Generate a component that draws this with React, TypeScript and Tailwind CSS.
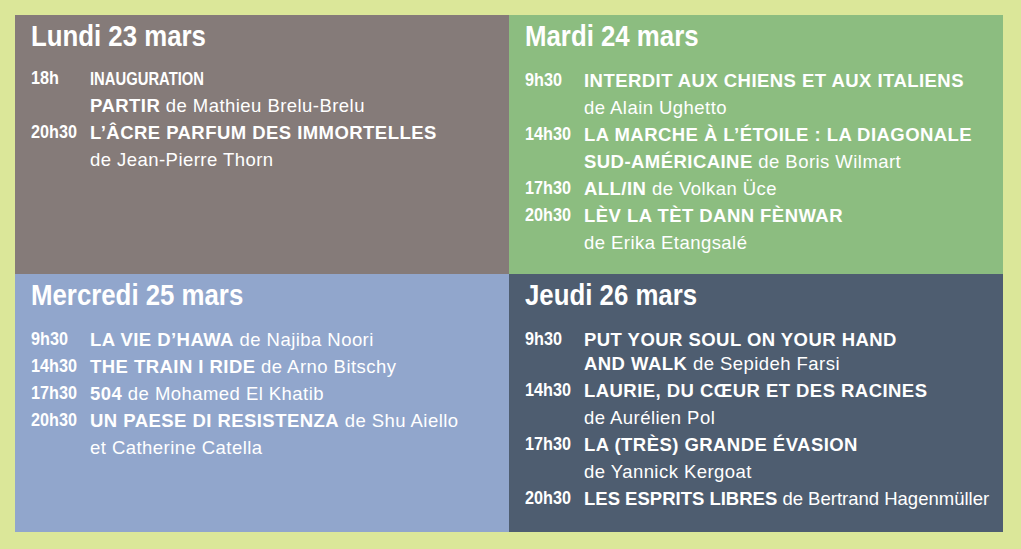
import React from "react";

type Line = { b?: string; r?: string; narrow?: boolean; tight?: boolean };
type Item = { time: string; lines: Line[]; tight?: boolean };
type Day = { title: string; bg: string; items: Item[] };

const days: Day[] = [
  {
    title: "Lundi 23 mars",
    bg: "bg-[#857b79]",
    items: [
      { time: "18h", lines: [{ b: "INAUGURATION", narrow: true }, { b: "PARTIR", r: " de Mathieu Brelu-Brelu" }] },
      { time: "20h30", lines: [{ b: "L’ÂCRE PARFUM DES IMMORTELLES" }, { r: "de Jean-Pierre Thorn" }] },
    ],
  },
  {
    title: "Mardi 24 mars",
    bg: "bg-[#8cbd80]",
    items: [
      { time: "9h30", lines: [{ b: "INTERDIT AUX CHIENS ET AUX ITALIENS" }, { r: "de Alain Ughetto" }] },
      { time: "14h30", lines: [{ b: "LA MARCHE À L’ÉTOILE : LA DIAGONALE" }, { b: "SUD-AMÉRICAINE", r: " de Boris Wilmart" }] },
      { time: "17h30", lines: [{ b: "ALL/IN", r: " de Volkan Üce" }] },
      { time: "20h30", lines: [{ b: "LÈV LA TÈT DANN FÈNWAR" }, { r: "de Erika Etangsalé" }] },
    ],
  },
  {
    title: "Mercredi 25 mars",
    bg: "bg-[#91a6cc]",
    items: [
      { time: "9h30", lines: [{ b: "LA VIE D’HAWA", r: " de Najiba Noori" }] },
      { time: "14h30", lines: [{ b: "THE TRAIN I RIDE", r: " de Arno Bitschy" }] },
      { time: "17h30", lines: [{ b: "504", r: " de Mohamed El Khatib" }] },
      { time: "20h30", lines: [{ b: "UN PAESE DI RESISTENZA", r: " de Shu Aiello" }, { r: "et Catherine Catella" }] },
    ],
  },
  {
    title: "Jeudi 26 mars",
    bg: "bg-[#4e5d70]",
    items: [
      { time: "9h30", tight: true, lines: [{ b: "PUT YOUR SOUL ON YOUR HAND" }, { b: "AND WALK", r: " de Sepideh Farsi" }] },
      { time: "14h30", lines: [{ b: "LAURIE, DU CŒUR ET DES RACINES" }, { r: "de Aurélien Pol" }] },
      { time: "17h30", lines: [{ b: "LA (TRÈS) GRANDE ÉVASION" }, { r: "de Yannick Kergoat" }] },
      { time: "20h30", lines: [{ b: "LES ESPRITS LIBRES", r: " de Bertrand Hagenmüller", tight: true }] },
    ],
  },
];

function Panel({ day, first }: { day: Day; first?: boolean }) {
  return (
    <div className={`${day.bg} text-white pl-4 pt-[3px] font-['Liberation_Sans',Arial,sans-serif]`}>
      <h2 className="font-bold text-[30px] leading-[36px]">
        <span className="inline-block origin-left scale-x-[0.86]">{day.title}</span>
      </h2>
      <div className={first ? "mt-[11px]" : "mt-[13px]"}>
        {day.items.map((it) => (
          <div key={it.time} className="flex">
            <div className="font-bold text-[18px] w-[59px] shrink-0 leading-[27px]">
              <span className="inline-block origin-left scale-x-[0.9]">{it.time}</span>
            </div>
            <div className="text-[18.5px] tracking-[0.45px] whitespace-nowrap">
              {it.lines.map((l, i) => (
                <div
                  key={i}
                  className={`leading-[27px] ${it.tight && i === 1 ? "-mt-[3px]" : ""} ${l.tight ? "tracking-[0px]" : ""}`}
                >
                  {l.narrow ? (
                    <span className="inline-block origin-left scale-x-[0.8] font-bold tracking-normal">{l.b}</span>
                  ) : (
                    l.b && <span className="font-bold">{l.b}</span>
                  )}
                  {l.r}
                </div>
              ))}
            </div>
          </div>
        ))}
      </div>
    </div>
  );
}

export default function App() {
  return (
    <div className="w-[1021px] h-[549px] bg-[#dbe799] pt-[15px] pl-[15px]">
      <div className="grid grid-cols-[494px_494px] grid-rows-[259px_258px]">
        {days.map((d, i) => (
          <Panel key={d.title} day={d} first={i === 0} />
        ))}
      </div>
    </div>
  );
}
